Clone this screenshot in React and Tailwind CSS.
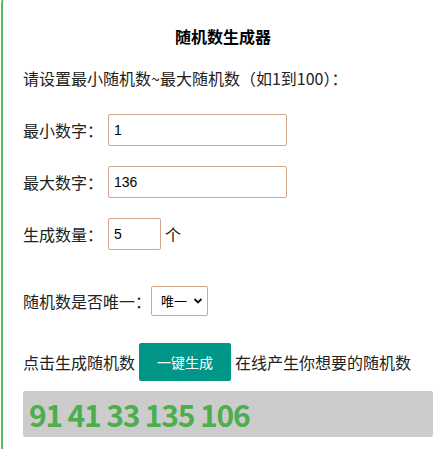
import { useState } from 'react';

// 随机数生成器 — 卡片只露出左边和顶部的圆角
export default function App() {
  const [min, setMin] = useState('1');
  const [max, setMax] = useState('136');
  const [count, setCount] = useState('5');
  const [unique, setUnique] = useState('1');
  const [result, setResult] = useState('91 41 33 135 106');

  const generate = () => {
    const lo = parseInt(min, 10) || 0;
    const hi = parseInt(max, 10) || 0;
    const n = parseInt(count, 10) || 0;
    const out = [];
    while (out.length < n) {
      const v = lo + Math.floor(Math.random() * (hi - lo + 1));
      if (unique === '1' && out.includes(v) && hi - lo + 1 >= n) continue;
      out.push(v);
    }
    setResult(out.join(' '));
  };

  const font = { fontFamily: '"Noto Sans CJK SC", "Noto Sans", sans-serif' };
  const inputFont = { fontFamily: '"Liberation Sans", Arial, sans-serif' };

  return (
    <div className="w-[442px] h-[449px] overflow-hidden bg-white" style={font}>
      <div className="-mt-[10px] ml-[1px] w-[448px] h-[470px] border-2 border-[#5cb85c] rounded-[14px] pl-[20px] pt-[32px] text-[16px] text-[#222] leading-[24px]">
        <h2 className="font-bold text-center text-[16px] text-black pr-[24px]">随机数生成器</h2>

        <p className="mt-[18px]">请设置最小随机数~最大随机数（如1到100）：</p>

        <div className="mt-[24px] flex items-center h-[32px]">
          <span className="w-[80px]">最小数字：</span>
          <input
            value={min}
            onChange={(e) => setMin(e.target.value)}
            className="ml-[5px] w-[179px] h-[32px] border border-[#d0a68c] rounded-[2px] px-[5px] text-[14px] text-black outline-none"
            style={inputFont}
          />
        </div>

        <div className="mt-[20px] flex items-center h-[32px]">
          <span className="w-[80px]">最大数字：</span>
          <input
            value={max}
            onChange={(e) => setMax(e.target.value)}
            className="ml-[5px] w-[179px] h-[32px] border border-[#d0a68c] rounded-[2px] px-[5px] text-[14px] text-black outline-none"
            style={inputFont}
          />
        </div>

        <div className="mt-[20px] flex items-center h-[32px]">
          <span className="w-[80px]">生成数量：</span>
          <input
            value={count}
            onChange={(e) => setCount(e.target.value)}
            className="ml-[5px] w-[53px] h-[32px] border border-[#d0a68c] rounded-[2px] px-[5px] text-[14px] text-black outline-none"
            style={inputFont}
          />
          <span className="ml-[4px]">个</span>
        </div>

        <div className="mt-[36px] flex items-center h-[30px]">
          <span className="w-[128px]">随机数是否唯一：</span>
          <div className="relative">
            <select
              value={unique}
              onChange={(e) => setUnique(e.target.value)}
              className="appearance-none w-[57px] h-[30px] border border-[#d0a68c] rounded-[2px] pl-[9px] text-[13px] text-black bg-white outline-none"
            >
              <option value="1">唯一</option>
              <option value="0">可重复</option>
            </select>
            <svg className="absolute right-[5px] top-[11px] w-[10px] h-[8px] pointer-events-none" viewBox="0 0 10 8">
              <path d="M1.5 2 L5 5.5 L8.5 2" fill="none" stroke="#111" strokeWidth="1.8" />
            </svg>
          </div>
        </div>

        <div className="mt-[27px] flex items-center h-[38px]">
          <span>点击生成随机数</span>
          <button
            onClick={generate}
            className="ml-[4px] w-[92px] h-[38px] bg-[#009688] text-white text-[14px] rounded-[2px] cursor-pointer"
          >
            一键生成
          </button>
          <span className="ml-[4px]">在线产生你想要的随机数</span>
        </div>

        <div className="mt-[10px] w-[410px] h-[46px] bg-[#cccccc] rounded-[3px] pl-[6px] flex items-center">
          <span className="text-[30px] font-bold text-[#4cae4c] tracking-[-1.2px] leading-none">{result}</span>
        </div>
      </div>
    </div>
  );
}
